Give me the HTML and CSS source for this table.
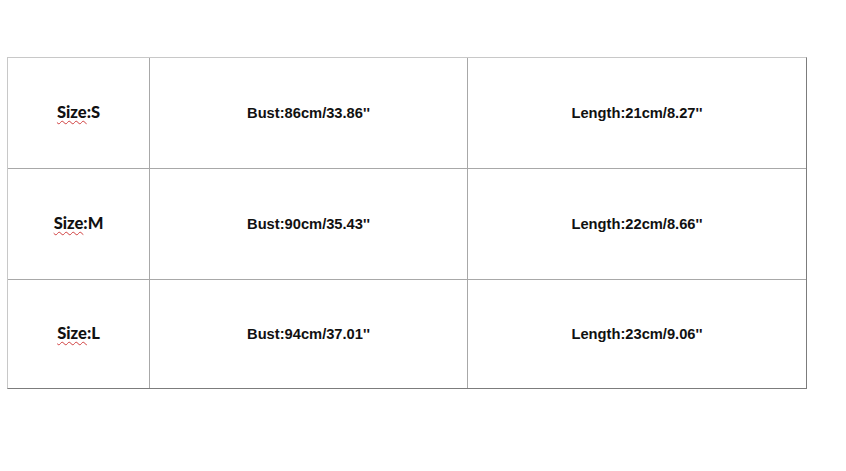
FILE: index.html
```html
<!DOCTYPE html>
<html>
<head>
<meta charset="utf-8">
<link rel="stylesheet" href="styles.css">
</head>
<body>
<div class="table">
  <div class="cell size"><span class="spell">Size</span>:S</div>
  <div class="cell">Bust:86cm/33.86''</div>
  <div class="cell last">Length:21cm/8.27''</div>
  <div class="cell size"><span class="spell">Size</span>:M</div>
  <div class="cell">Bust:90cm/35.43''</div>
  <div class="cell last">Length:22cm/8.66''</div>
  <div class="cell size bottom"><span class="spell">Size</span>:L</div>
  <div class="cell bottom">Bust:94cm/37.01''</div>
  <div class="cell last bottom">Length:23cm/9.06''</div>
</div>
</body>
</html>
```
FILE: styles.css
```css
html, body { margin: 0; padding: 0; background: #fff; }
body { padding: 57px 0 0 7px; }
.table {
  display: grid;
  grid-template-columns: 142px 318px 338px;
  grid-template-rows: 111px 111px 108px;
  width: 800px;
  box-sizing: border-box;
  border-top: 1px solid #c8c8c8;
  border-left: 1px solid #c8c8c8;
  border-right: 1px solid #7c7c7c;
  border-bottom: 1px solid #7c7c7c;
  font-family: "Liberation Sans", Arial, sans-serif;
  font-weight: bold;
  font-size: 14.7px;
  color: #111;
}
.cell {
  display: flex;
  align-items: center;
  justify-content: center;
  border-right: 1px solid #a8a8a8;
  border-bottom: 1px solid #a8a8a8;
}
.cell.last { border-right: none; }
.cell.bottom { border-bottom: none; }
.size {
  font-family: Lato, "Liberation Sans", sans-serif;
  font-size: 16.5px;
  font-weight: 900;
  padding-bottom: 2px;
}
.spell {
  text-decoration: underline wavy #d04040;
  text-decoration-thickness: 1px;
  text-underline-offset: 2px;
}
```
